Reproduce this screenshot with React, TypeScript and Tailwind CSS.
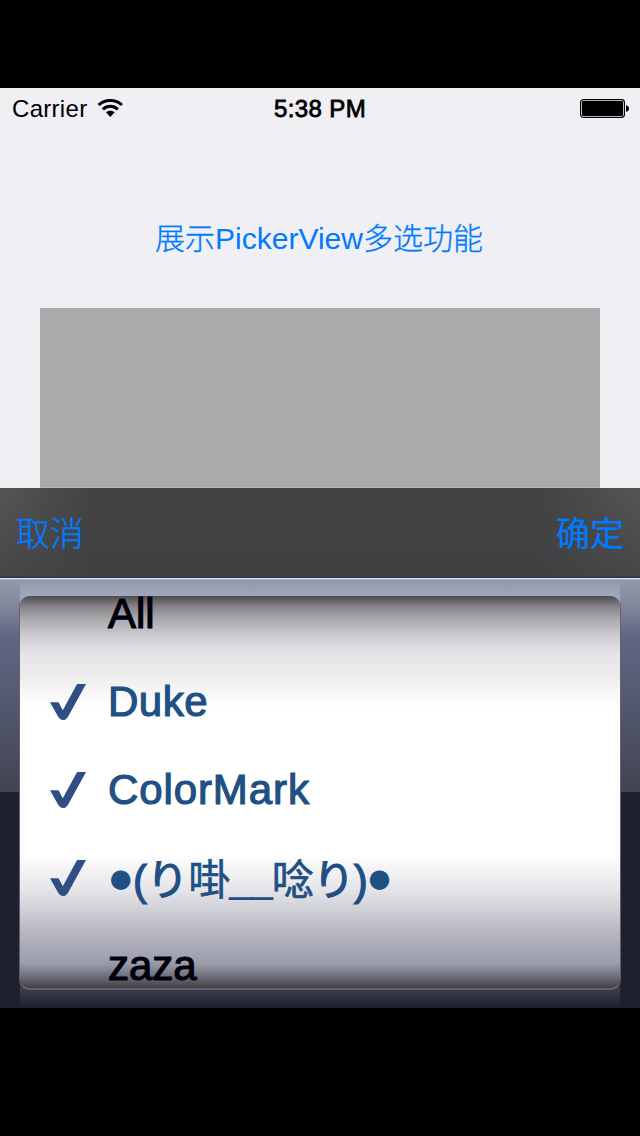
import React from "react";

const latin = "font-['Liberation_Sans','Noto_Sans_CJK_SC',sans-serif]";

function WifiIcon() {
  return (
    <svg width="26" height="20" viewBox="0 0 26 20" className="ml-[10px] shrink-0">
      <g fill="none" stroke="#000" strokeWidth="3">
        <path d="M1.6 6C8.3-.1 18.3-.1 25 6" />
        <path d="M5.8 10.3c4.3-4 10.7-4 15 0" />
      </g>
      <path d="M9 13.2c2.5-2 6.1-2 8.6 0L13.3 18z" />
    </svg>
  );
}

function BatteryIcon() {
  return (
    <svg width="50" height="20" viewBox="0 0 50 20">
      <rect x=".6" y=".6" width="43.8" height="17.8" rx="2.8" fill="none" stroke="#000" strokeWidth="1.2" />
      <rect x="2" y="2" width="41" height="15" rx="1.2" />
      <path d="M46 6.2c4 .4 4 6.2 0 6.6z" />
    </svg>
  );
}

function StatusBar() {
  return (
    <div className="grid h-[42px] grid-cols-3 items-center pl-3 text-2xl leading-[42px] text-black">
      <div className="flex items-center">
        <span className="tracking-[0.3px]">Carrier</span>
        <WifiIcon />
      </div>
      <span className="-ml-3 text-center tracking-[0.4px] [-webkit-text-stroke:0.8px_currentColor]">5:38 PM</span>
      <div className="flex justify-end pr-[10px]">
        <BatteryIcon />
      </div>
    </div>
  );
}

function CheckMark() {
  return (
    <svg width="36" height="36" viewBox="0 0 36 36" fill="#304e84">
      <path d="M0 18.2h7.6q1 .1 1.6 1.2l3.6 6.8L26.4 1.2Q27 0 28.2 0H36L18.2 32.4Q16 36 13 36t-5-3.4z" />
    </svg>
  );
}

const rows = [
  { label: "All", checked: false, spacing: "tracking-[0px]" },
  { label: "Duke", checked: true, spacing: "tracking-[0.5px]" },
  { label: "ColorMark", checked: true, spacing: "tracking-[0.9px]" },
  {
    label: (
      <>
        <span className="align-[3px]">●</span>(り
        <span className="tracking-[-0.8px] [-webkit-text-stroke:0.6px_currentColor]">啩</span>
        <span className="align-[3px] tracking-[-3.2px] [-webkit-text-stroke:0px]">__</span>
        <span className="ml-0.5 tracking-[-1px] [-webkit-text-stroke:0.6px_currentColor]">唸</span>
        <span className="tracking-[-1px]">
          り)<span className="align-[3px]">●</span>
        </span>
      </>
    ),
    checked: true,
    spacing: "tracking-[-0.4px]",
  },
  { label: "zaza", checked: false, spacing: "tracking-[0px]" },
];

function Picker() {
  return (
    <div className="flex h-[428px] bg-[linear-gradient(180deg,#9298a8_0px,#84889c_25px,#606882_55px,#596079_90px,#424452_212px,#1e202d_212px,#1e202d_428px)]">
      <div className="w-5 shrink-0" />
      <div className="w-[600px] bg-[linear-gradient(180deg,#9298ab_0px,#a2a8be_17px,#a2a8be_35px,#30313e_390px,#3e3e4e_409px,#1d1f2b_428px)] pt-4">
        <div className="h-[392px] overflow-hidden rounded-[10px] bg-[linear-gradient(180deg,#4d4b50_0px,#838287_10px,#a8a7ac_22px,#d0cfd4_42px,#e4e4e8_57px,#ededee_80px,#ffffff_112px,#ffffff_258px,#e5e4e8_294px,#cecfd5_315px,#b6b5c1_337px,#9b9dac_367px,#74747f_379px,#403f43_392px)] shadow-[0_1px_0_1px_#636171]">
          <div className="-mt-[26px]">
            {rows.map((row, i) => (
              <div key={i} className="flex h-[88px] items-center">
                <div className="flex w-[88px] shrink-0 pl-[30px]">{row.checked && <CheckMark />}</div>
                <span
                  className={`h-[88px] whitespace-nowrap text-[42px] leading-[88px] [-webkit-text-stroke:1.2px_currentColor] ${row.spacing} ${row.checked ? "text-[#205083]" : "text-[#00000c]"}`}
                >
                  {row.label}
                </span>
              </div>
            ))}
          </div>
        </div>
      </div>
      <div className="w-5 shrink-0" />
    </div>
  );
}

export default function App() {
  return (
    <div className={`flex h-[1136px] w-[640px] flex-col overflow-hidden bg-black pt-[88px] ${latin}`}>
      <div className="h-[400px] bg-[#efeff4]">
        <StatusBar />
        <button className="mt-[84px] block h-[50px] w-full pr-[2px] text-center text-[30px] font-light leading-[46px] text-[#007aff]">
          <span className="[-webkit-text-stroke:0.35px_currentColor]">展示</span>PickerView
          <span className="[-webkit-text-stroke:0.35px_currentColor]">多选功能</span>
        </button>
        <div className="mx-10 mt-11 h-[180px] border-b border-[#b8b8b8] bg-[#aaaaaa]" />
      </div>
      <div className="h-[92px] bg-[linear-gradient(180deg,#43434300,#3e3f42aa),linear-gradient(90deg,#555555_0px,#434343_92px,#434343_540px,#555555_640px)]">
        <div className="flex h-[88px] items-center justify-between px-4 pt-1 text-[34px] text-[#007aff]">
          <button className="font-light [-webkit-text-stroke:0.4px_currentColor]">取消</button>
          <button className="[-webkit-text-stroke:0.2px_currentColor]">确定</button>
        </div>
        <div className="h-0.5 bg-[#343b4c]" />
        <div className="h-px bg-[#dadce2]" />
        <div className="h-px bg-[#afb5c2]" />
      </div>
      <Picker />
    </div>
  );
}
